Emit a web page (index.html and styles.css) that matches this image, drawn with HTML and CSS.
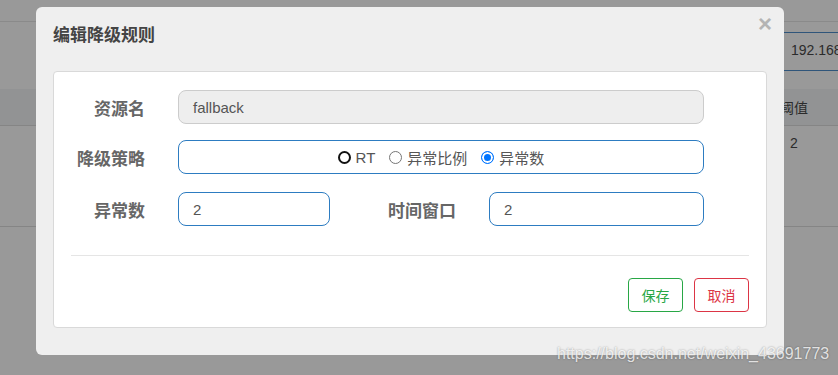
FILE: index.html
```html
<!DOCTYPE html>
<html lang="zh-CN">
<head>
    <meta charset="UTF-8">
    <title>编辑降级规则</title>
    <link rel="stylesheet" href="styles.css">
</head>
<body>
    <div class="page">
        <div class="page-top"></div>
        <div class="page-search">
            <div class="search-box">192.168</div>
        </div>
        <div class="table-head"><span class="th-cell">阈值</span></div>
        <div class="table-row"><span class="td-cell">2</span></div>
    </div>

    <div class="modal">
        <button class="modal-close">&times;</button>
        <h4 class="modal-title">编辑降级规则</h4>
        <div class="modal-card">
            <div class="form-row">
                <label class="form-label">资源名</label>
                <div class="form-control readonly">fallback</div>
            </div>
            <div class="form-row">
                <label class="form-label">降级策略</label>
                <div class="form-control radio-group">
                    <label class="radio"><span class="radio-dot focused"></span>RT</label>
                    <label class="radio"><span class="radio-dot"></span>异常比例</label>
                    <label class="radio"><span class="radio-dot checked"></span>异常数</label>
                </div>
            </div>
            <div class="form-row">
                <label class="form-label">异常数</label>
                <div class="form-control short">2</div>
                <label class="form-label wide">时间窗口</label>
                <div class="form-control medium">2</div>
            </div>
            <div class="divider"></div>
            <div class="actions">
                <button class="btn btn-save">保存</button>
                <button class="btn btn-cancel">取消</button>
            </div>
        </div>
    </div>

    <div class="watermark">https://blog.csdn.net/weixin_43691773</div>
</body>
</html>
```

FILE: styles.css
```css
* {
    margin: 0;
    padding: 0;
    box-sizing: border-box;
}

body {
    width: 838px;
    height: 375px;
    overflow: hidden;
    background: #999;
    font-family: 'Liberation Sans', 'Noto Sans CJK SC', sans-serif;
    font-size: 14px;
    color: #333;
    position: relative;
}

/* page behind the backdrop */
.page-top {
    height: 22px;
    border-bottom: 1px solid #8a8a8a;
}

.page-search {
    height: 67px;
    padding-top: 10px;
    display: flex;
    justify-content: flex-end;
}

.search-box {
    width: 54px;
    height: 39px;
    border-top: 1px solid #2f557a;
    border-bottom: 1px solid #2f557a;
    padding: 9px 0 0 7px;
    font-size: 14px;
    color: #2b2b2b;
    white-space: nowrap;
    overflow: hidden;
}

.table-head {
    height: 37px;
    background: #929394;
    border-bottom: 1px solid #858585;
    display: flex;
    justify-content: flex-end;
    align-items: center;
}

.th-cell {
    width: 58px;
    color: #2b2b2b;
}

.table-row {
    height: 101px;
    border-bottom: 1px solid #858585;
    display: flex;
    justify-content: flex-end;
    padding-top: 9px;
}

.td-cell {
    width: 48px;
    color: #2b2b2b;
}

/* modal */
.modal {
    position: absolute;
    left: 36px;
    top: 7px;
    width: 748px;
    height: 348px;
    background: #efefef;
    border-radius: 6px;
    padding: 17px 17px 0 17px;
}

.modal-close {
    position: absolute;
    top: 5px;
    right: 12px;
    border: none;
    background: none;
    font-family: 'Liberation Sans', sans-serif;
    font-size: 24px;
    font-weight: bold;
    line-height: 1;
    color: #b4b4b4;
}

.modal-title {
    font-size: 17px;
    font-weight: bold;
    line-height: 24px;
    color: #444;
    margin-bottom: 23px;
}

.modal-card {
    background: #fff;
    border: 1px solid #d9d9d9;
    border-radius: 4px;
    height: 257px;
    padding-top: 18px;
}

.form-row {
    display: flex;
    align-items: center;
    height: 34px;
    margin-bottom: 16px;
}

.form-row:nth-child(2) {
    margin-bottom: 18px;
}

.form-label {
    width: 91px;
    margin-right: 33px;
    text-align: right;
    font-size: 17px;
    font-weight: bold;
    color: #666;
}

.form-label.wide {
    width: 126px;
}

.form-control {
    width: 526px;
    height: 34px;
    border: 1px solid #2d7cc1;
    border-radius: 8px;
    padding: 0 14px;
    display: flex;
    align-items: center;
    font-size: 15px;
    color: #555;
}

.form-control.readonly {
    background: #eee;
    border-color: #ccc;
}

.form-control.short {
    width: 152px;
}

.form-control.medium {
    width: 215px;
}

.radio-group {
    justify-content: center;
    gap: 14px;
}

.radio {
    display: flex;
    align-items: center;
    gap: 5px;
    color: #555;
}

.radio-dot {
    width: 13px;
    height: 13px;
    border-radius: 50%;
    border: 1px solid #767676;
    background: #fff;
}

.radio-dot.focused {
    border: 2.5px solid #111;
}

.radio-dot.checked {
    border: 1px solid #0075ff;
    box-shadow: inset 0 0 0 2px #fff;
    background: #0075ff;
}

.divider {
    margin: 29px 17px 0 17px;
    border-top: 1px solid #e5e5e5;
}

.actions {
    display: flex;
    justify-content: flex-end;
    gap: 11px;
    padding: 22px 17px 0 0;
}

.btn {
    width: 55px;
    height: 34px;
    background: #fff;
    border: 1px solid;
    border-radius: 4px;
    font-family: 'Liberation Sans', 'Noto Sans CJK SC', sans-serif;
    font-size: 14px;
}

.btn-save {
    color: #28a745;
    border-color: #28a745;
}

.btn-cancel {
    color: #dc3545;
    border-color: #dc3545;
}

.watermark {
    position: absolute;
    left: 557px;
    top: 345px;
    font-family: 'Liberation Sans', sans-serif;
    font-size: 16px;
    color: rgba(255, 255, 255, 0.8);
    text-shadow: 0 0 2px rgba(0, 0, 0, 0.4);
    white-space: nowrap;
}
```
